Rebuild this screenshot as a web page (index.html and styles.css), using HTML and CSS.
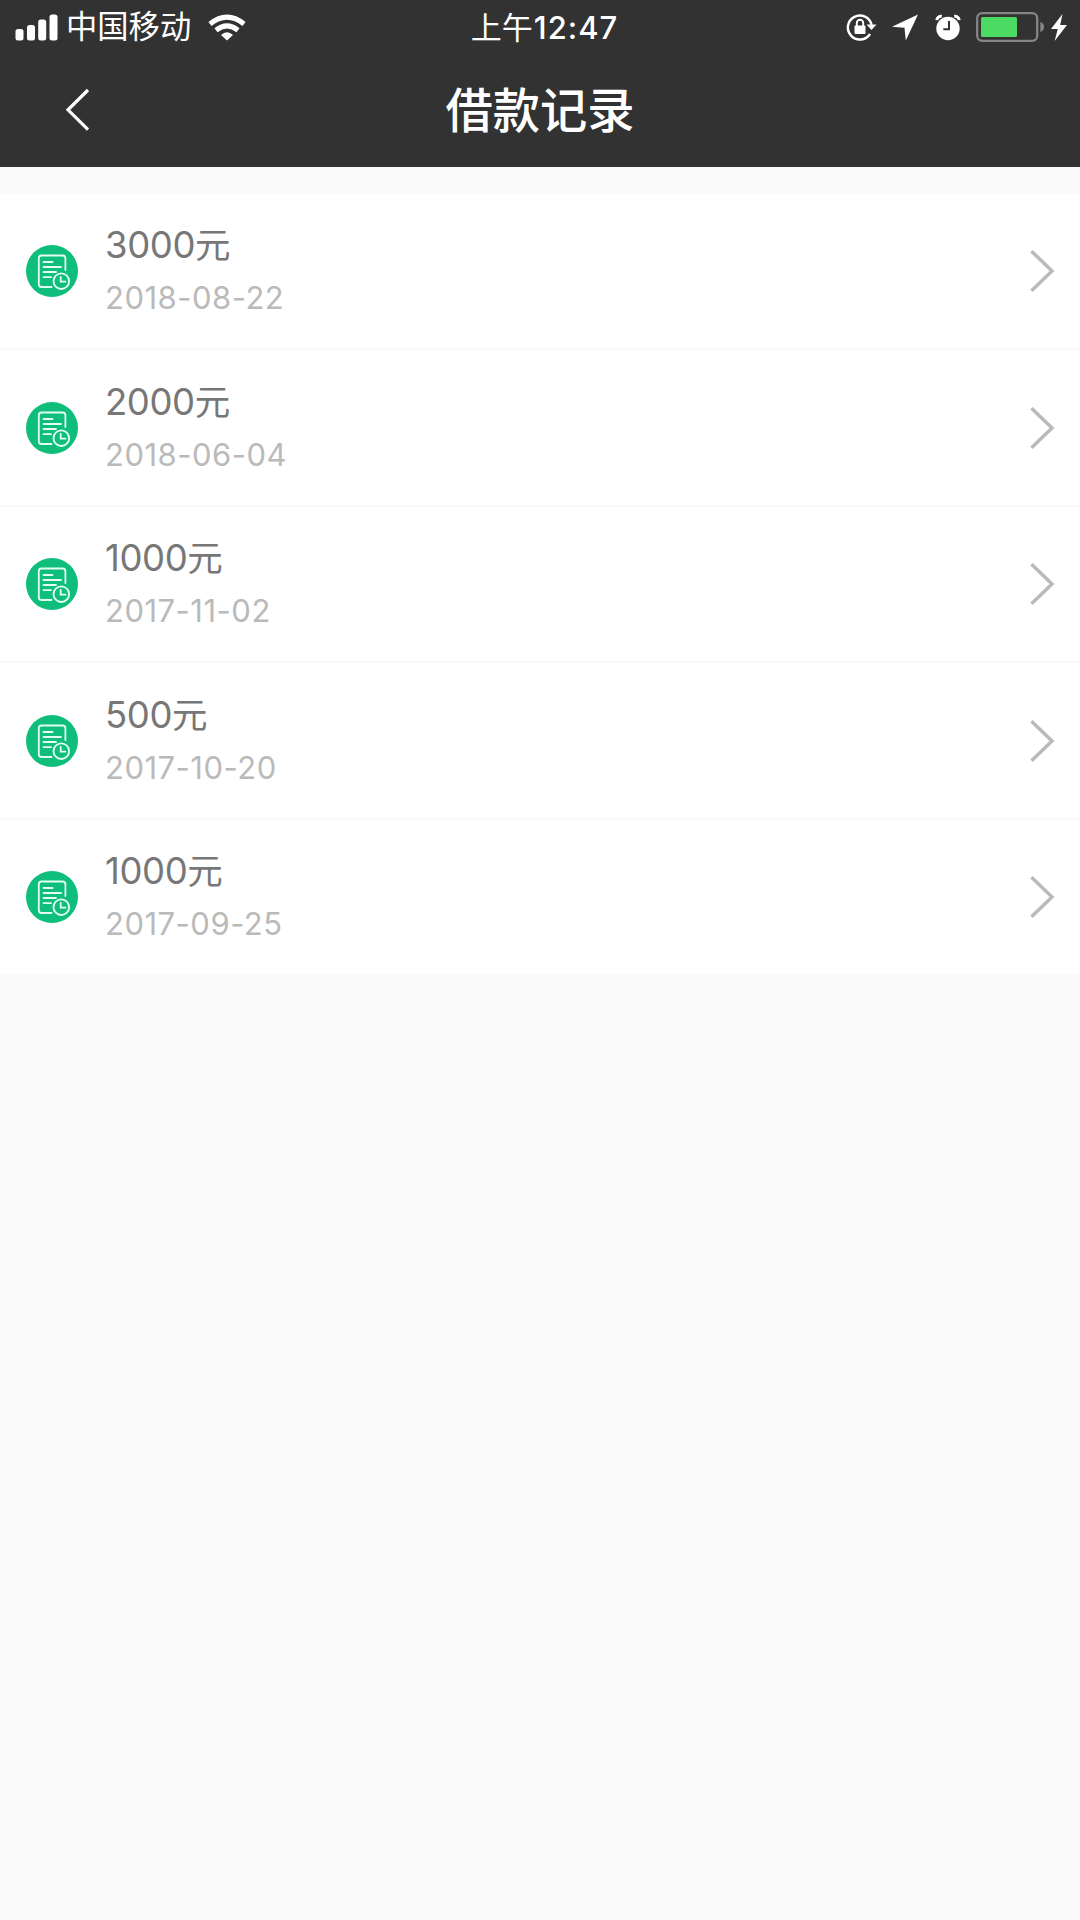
FILE: index.html
```html
<!DOCTYPE html>
<html lang="zh-CN">
<head>
    <meta charset="UTF-8">
    <meta name="viewport" content="width=device-width, initial-scale=1.0">
    <title>借款记录</title>
    <link rel="stylesheet" href="styles.css">
</head>
<body>
    <!-- shared icons -->
    <svg class="defs" width="0" height="0">
        <symbol id="icon-record" viewBox="0 0 52 52">
            <circle cx="26" cy="26" r="26" fill="#0fbe7b"/>
            <g fill="none" stroke="#e4fff2" stroke-width="1.8" stroke-linecap="round">
                <path d="M25.5 42H15.5Q12.8 42 12.8 39.3V13.2Q12.8 10.5 15.5 10.5H36.7Q39.4 10.5 39.4 13.2V25"/>
                <path d="M17.5 17H26.5M17.5 22H35M17.5 27H30M17.5 32.2H25"/>
                <circle cx="35.3" cy="36.2" r="7.8"/>
                <path d="M34.7 32V36.7H39.5"/>
            </g>
        </symbol>
        <symbol id="icon-arrow" viewBox="0 0 26 44">
            <path d="M2.5 2.2L23 22L2.5 41.8" fill="none" stroke="#bababa" stroke-width="3.5"/>
        </symbol>
    </svg>

    <div class="header">
        <div class="status-bar">
            <div class="status-left">
                <svg width="43" height="27" viewBox="0 0 43 27" fill="#fff">
                    <rect x="0.5" y="15" width="8" height="11.5" rx="2.5"/>
                    <rect x="12" y="11" width="8" height="15.5" rx="2.5"/>
                    <rect x="23.2" y="5.5" width="8" height="21" rx="2.5"/>
                    <rect x="34.5" y="0.5" width="8" height="26" rx="2.5"/>
                </svg>
                <span class="carrier">中国移动</span>
                <svg width="38" height="27" viewBox="0 0 38 27" fill="none" stroke="#fff" stroke-width="5">
                    <path d="M2 10Q19 -3.6 36 10"/>
                    <path d="M8 16.2Q19 7.6 30 16.2"/>
                    <path d="M13 21Q19 15.4 25 21L19 26.5Z" fill="#fff" stroke="none"/>
                </svg>
            </div>
            <div class="time">上午<span class="clock">12:47</span></div>
            <div class="status-right">
                <svg class="icon-lock" width="31" height="28" viewBox="0 0 31 28">
                    <path d="M24 21A12 12 0 1 1 25.6 12" fill="none" stroke="#fff" stroke-width="2.4"/>
                    <path d="M20.5 11.5H30.5L25.5 17Z" fill="#fff"/>
                    <rect x="8.5" y="12.5" width="11" height="8.5" rx="1" fill="#fff"/>
                    <path d="M10.8 13V10A3.2 3.2 0 0 1 17.2 10V13" fill="none" stroke="#fff" stroke-width="1.9"/>
                </svg>
                <svg class="icon-location" width="26" height="27" viewBox="0 0 26 27">
                    <path d="M26 0.5L13.8 26.5L12.5 13.8L0 12.7Z" fill="#fff"/>
                </svg>
                <svg class="icon-alarm" width="26" height="27" viewBox="0 0 26 27">
                    <circle cx="13" cy="14.5" r="11.7" fill="#fff"/>
                    <path d="M1.8 6.2A4.4 4.4 0 0 1 6.8 2.2M24.2 6.2A4.4 4.4 0 0 0 19.2 2.2" fill="none" stroke="#fff" stroke-width="3"/>
                    <path d="M14 7V15.3H8.3" fill="none" stroke="#323232" stroke-width="2"/>
                </svg>
                <svg class="icon-battery" width="69" height="30" viewBox="0 0 69 30">
                    <rect x="1.2" y="1.2" width="60" height="27.6" rx="5" fill="none" stroke="#858585" stroke-width="2.3"/>
                    <rect x="5" y="5" width="36" height="20" rx="1.5" fill="#4cd964"/>
                    <path d="M64.3 10Q68 11 68 15Q68 19 64.3 20Z" fill="#858585"/>
                </svg>
                <svg class="icon-bolt" width="16" height="27" viewBox="0 0 16 27">
                    <path d="M11.5 0L0 15H6.8L3.6 27L16 11H9.2Z" fill="#fff"/>
                </svg>
            </div>
        </div>
        <div class="nav-bar">
            <svg class="back" width="26" height="44" viewBox="0 0 26 44">
                <path d="M24 2L4 21.8L24 41.6" fill="none" stroke="#fff" stroke-width="3.2"/>
            </svg>
            <h1>借款记录</h1>
        </div>
    </div>

    <div class="record-list">
        <div class="record">
            <svg class="record-icon"><use href="#icon-record"/></svg>
            <div class="record-info">
                <div class="amount">3000<span class="unit">元</span></div>
                <div class="date">2018-08-22</div>
            </div>
            <svg class="arrow"><use href="#icon-arrow"/></svg>
        </div>
        <div class="record">
            <svg class="record-icon"><use href="#icon-record"/></svg>
            <div class="record-info">
                <div class="amount">2000<span class="unit">元</span></div>
                <div class="date">2018-06-04</div>
            </div>
            <svg class="arrow"><use href="#icon-arrow"/></svg>
        </div>
        <div class="record">
            <svg class="record-icon"><use href="#icon-record"/></svg>
            <div class="record-info">
                <div class="amount">1000<span class="unit">元</span></div>
                <div class="date">2017-11-02</div>
            </div>
            <svg class="arrow"><use href="#icon-arrow"/></svg>
        </div>
        <div class="record">
            <svg class="record-icon"><use href="#icon-record"/></svg>
            <div class="record-info">
                <div class="amount">500<span class="unit">元</span></div>
                <div class="date">2017-10-20</div>
            </div>
            <svg class="arrow"><use href="#icon-arrow"/></svg>
        </div>
        <div class="record">
            <svg class="record-icon"><use href="#icon-record"/></svg>
            <div class="record-info">
                <div class="amount">1000<span class="unit">元</span></div>
                <div class="date">2017-09-25</div>
            </div>
            <svg class="arrow"><use href="#icon-arrow"/></svg>
        </div>
    </div>
</body>
</html>
```

FILE: styles.css
```css
* {
    box-sizing: border-box;
}

body {
    margin: 0;
    min-height: 100vh;
    background-color: #fafafa;
    font-family: Inter, "Noto Sans CJK SC", sans-serif;
    color: #777;
}

svg {
    display: block;
    flex-shrink: 0;
}

.defs {
    display: none;
}

.header {
    height: 167px;
    background-color: #323232;
    color: #fff;
}

.status-bar {
    display: grid;
    grid-template-columns: 1fr auto 1fr;
    align-items: center;
    height: 54px;
    padding: 0 13px 0 15px;
}

.status-left,
.status-right {
    display: flex;
    align-items: center;
}

.status-right {
    justify-content: flex-end;
}

.carrier {
    margin: 0 17px 0 8px;
    padding-top: 1px;
    font-size: 31.3px;
    line-height: 53px;
}

.time {
    padding: 1px 0 0 7px;
    font-size: 31px;
    line-height: 52px;
    white-space: nowrap;
}

.clock {
    margin-left: 1px;
    font-weight: 500;
    letter-spacing: 1px;
}

.icon-location {
    margin-left: 15px;
}

.icon-alarm {
    margin-left: 17px;
}

.icon-battery {
    margin-left: 15px;
}

.icon-bolt {
    margin-left: 6px;
}

.nav-bar {
    display: grid;
    grid-template-columns: 1fr auto 1fr;
    align-items: center;
    height: 111px;
    padding: 0 64px;
}

.nav-bar h1 {
    margin: 0;
    padding-top: 2px;
    font-size: 47.3px;
    font-weight: 500;
    line-height: 60px;
}

.record-list {
    margin-top: 26.5px;
    background-color: #fff;
}

.record {
    display: flex;
    align-items: center;
    height: 156.5px;
    padding: 1px 25px 0 26px;
    border-bottom: 2px solid #fafafa;
}

.record-icon {
    width: 52px;
    height: 52px;
}

.record-info {
    flex: 1;
    margin-left: 27px;
    padding-top: 1px;
}

.amount {
    font-size: 36.5px;
    line-height: 52px;
    letter-spacing: -0.4px;
}

.unit {
    font-size: 35.5px;
}

.date {
    font-size: 31px;
    line-height: 52px;
    letter-spacing: 0.5px;
    color: #bababa;
}

.arrow {
    width: 26px;
    height: 44px;
}
```
